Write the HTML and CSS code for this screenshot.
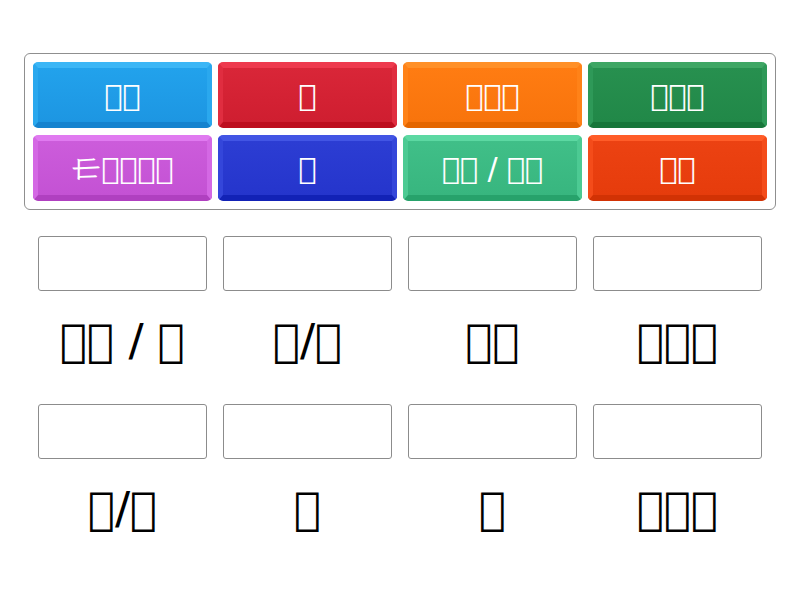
FILE: index.html
```html
<!DOCTYPE html>
<html lang="zh">
<head>
<meta charset="utf-8">
<title>Match up</title>
<link rel="stylesheet" href="styles.css">
</head>
<body>
<div class="bank">
  <div class="tile blue">&#x30000;&#x30001;</div>
  <div class="tile red">&#x30031;</div>
  <div class="tile orange">&#x30041;&#x30042;&#x30043;</div>
  <div class="tile green">&#x30051;&#x30052;&#x30053;</div>
  <div class="tile purple">&#x30002;&#x30003;&#x30004;&#x30005;&#x30006;</div>
  <div class="tile navy">&#x30071;</div>
  <div class="tile teal">&#x30081;&#x30082; / &#x30083;&#x30084;</div>
  <div class="tile vermilion">&#x30091;&#x30092;</div>
</div>
<div class="targets">
  <div class="cell"><div class="slot"></div><div class="label">&#x300A1;&#x300A2; / &#x300A3;</div></div>
  <div class="cell"><div class="slot"></div><div class="label">&#x300B1;/&#x300B2;</div></div>
  <div class="cell"><div class="slot"></div><div class="label">&#x300C1;&#x300C2;</div></div>
  <div class="cell"><div class="slot"></div><div class="label">&#x300D1;&#x300D2;&#x300D3;</div></div>
  <div class="cell"><div class="slot"></div><div class="label">&#x300E1;/&#x300E2;</div></div>
  <div class="cell"><div class="slot"></div><div class="label">&#x300F1;</div></div>
  <div class="cell"><div class="slot"></div><div class="label">&#x30101;</div></div>
  <div class="cell"><div class="slot"></div><div class="label">&#x30111;&#x30112;&#x30113;</div></div>
</div>
</body>
</html>
```
FILE: styles.css
```css
html, body {
  margin: 0;
  padding: 0;
  background: #ffffff;
}
body {
  width: 800px;
  height: 600px;
  font-family: "DejaVu Sans", sans-serif;
}
.bank {
  box-sizing: border-box;
  margin: 53px 0 0 24px;
  width: 752px;
  height: 157px;
  border: 1px solid #8f8f8f;
  border-radius: 6px;
  padding: 8px;
  display: grid;
  grid-template-columns: repeat(4, 179px);
  grid-template-rows: 66px 66px;
  column-gap: 6px;
  row-gap: 7px;
}
.tile {
  box-sizing: border-box;
  border-radius: 5px;
  border-style: solid;
  border-width: 6px 5px 6px 5px;
  display: flex;
  align-items: center;
  justify-content: center;
  color: #ffffff;
  font-size: 30px;
  white-space: nowrap;
}
.blue { background: linear-gradient(#22a2ec, #1d96e2); border-color: #3bb6f6 #2aa8ee #1583cf #2aa8ee; }
.red { background: linear-gradient(#d92638, #cf1e30); border-color: #ee3a4e #e02d40 #bd0e1f #e02d40; }
.orange { background: linear-gradient(#ff7c12, #f8740c); border-color: #ff9028 #ff8218 #e46600 #ff8218; }
.green { background: linear-gradient(#27904f, #218848); border-color: #3ea664 #2e9958 #17763a #2e9958; }
.purple { background: linear-gradient(#cc5cdb, #c452d4); border-color: #e07af0 #d468e4 #b040c0 #d468e4; }
.navy { background: linear-gradient(#2c3dd3, #2535cc); border-color: #4255e4 #3446da #1222b6 #3446da; }
.teal { background: linear-gradient(#40bf88, #38b67f); border-color: #5cd8a2 #4cca93 #27a26b #4cca93; }
.vermilion { background: linear-gradient(#ec4212, #e63c0c); border-color: #ff5c28 #f44c1a #d23204 #f44c1a; }
.targets {
  margin: 26px 0 0 30px;
  display: grid;
  grid-template-columns: repeat(4, 185px);
  row-gap: 15px;
}
.cell {
  display: flex;
  flex-direction: column;
  align-items: center;
}
.slot {
  box-sizing: border-box;
  width: 169px;
  height: 55px;
  border: 1px solid #8c8c8c;
  border-radius: 3px;
  background: #ffffff;
}
.label {
  height: 98px;
  display: flex;
  align-items: center;
  justify-content: center;
  font-size: 45px;
  color: #000000;
  white-space: nowrap;
}
```
